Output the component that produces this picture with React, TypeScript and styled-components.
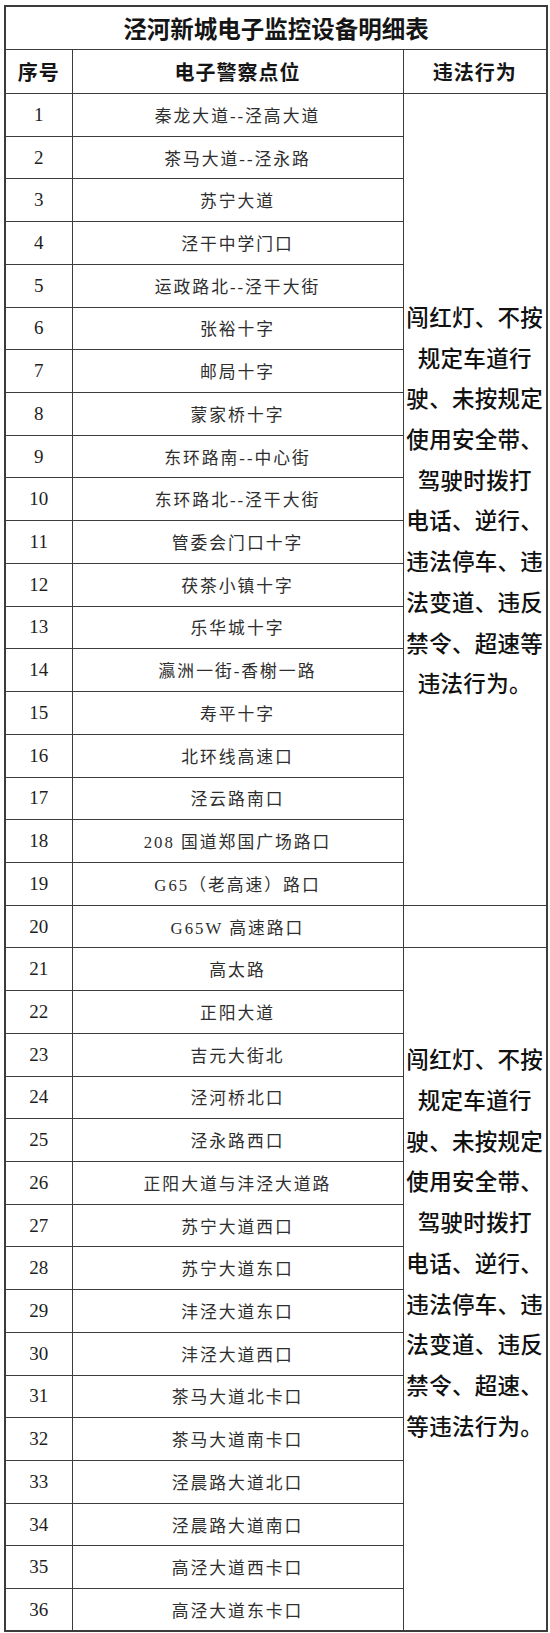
import styled, { createGlobalStyle } from "styled-components";

const GlobalStyle = createGlobalStyle`
  html, body {
    margin: 0;
    padding: 0;
    background: #ffffff;
  }
`;

const Page = styled.div`
  width: 550px;
  padding: 5px 4px 4px 4px;
  box-sizing: border-box;
  background: #ffffff;
`;

const Table = styled.table`
  width: 542px;
  border-collapse: collapse;
  table-layout: fixed;
  border: 2px solid #3c3c3c;
  color: #222;
`;

const TitleCell = styled.th`
  height: 42px;
  padding: 0;
  border: 1.5px solid #3c3c3c;
  font-family: "Noto Sans CJK SC", sans-serif;
  font-size: 23.5px;
  font-weight: 700;
  color: #151515;
  text-align: center;
  vertical-align: middle;
`;

const HeaderCell = styled.th`
  height: 43px;
  padding: 0;
  border: 1.5px solid #3c3c3c;
  font-family: "Noto Sans CJK SC", sans-serif;
  font-size: 20px;
  font-weight: 700;
  letter-spacing: 1px;
  color: #151515;
  text-align: center;
  vertical-align: middle;
`;

const Row = styled.tr`
  height: 42.72px;
`;

const NumCell = styled.td`
  padding: 0;
  border: 1.5px solid #3c3c3c;
  font-family: "Liberation Serif", "Noto Sans CJK SC", serif;
  font-size: 19px;
  color: #1e1e1e;
  text-align: center;
  vertical-align: middle;
`;

const PlaceCell = styled.td`
  padding: 0;
  border: 1.5px solid #3c3c3c;
  font-family: "Liberation Serif", "Noto Sans CJK SC", serif;
  font-size: 16.8px;
  letter-spacing: 2px;
  color: #2e2e2e;
  text-align: center;
  vertical-align: middle;
  white-space: nowrap;
`;

const ViolationCell = styled.td<{ $top: number }>`
  padding: ${(p) => p.$top}px 0 0 0;
  border: 1.5px solid #3c3c3c;
  font-family: "Noto Sans CJK SC", sans-serif;
  font-size: 22.5px;
  font-weight: 500;
  color: #111;
  text-align: center;
  vertical-align: top;
`;

const Line = styled.div`
  display: block;
  height: 40.7px;
  line-height: 40.7px;
  white-space: nowrap;
  letter-spacing: 0.3px;
`;

const places = [
  "秦龙大道--泾高大道",
  "茶马大道--泾永路",
  "苏宁大道",
  "泾干中学门口",
  "运政路北--泾干大街",
  "张裕十字",
  "邮局十字",
  "蒙家桥十字",
  "东环路南--中心街",
  "东环路北--泾干大街",
  "管委会门口十字",
  "茯茶小镇十字",
  "乐华城十字",
  "瀛洲一街-香榭一路",
  "寿平十字",
  "北环线高速口",
  "泾云路南口",
  "208 国道郑国广场路口",
  "G65（老高速）路口",
  "G65W 高速路口",
  "高太路",
  "正阳大道",
  "吉元大街北",
  "泾河桥北口",
  "泾永路西口",
  "正阳大道与沣泾大道路",
  "苏宁大道西口",
  "苏宁大道东口",
  "沣泾大道东口",
  "沣泾大道西口",
  "茶马大道北卡口",
  "茶马大道南卡口",
  "泾晨路大道北口",
  "泾晨路大道南口",
  "高泾大道西卡口",
  "高泾大道东卡口",
];

const firstBlock = [
  "闯红灯、不按",
  "规定车道行",
  "驶、未按规定",
  "使用安全带、",
  "驾驶时拨打",
  "电话、逆行、",
  "违法停车、违",
  "法变道、违反",
  "禁令、超速等",
  "违法行为。",
];

const secondBlock = [
  "闯红灯、不按",
  "规定车道行",
  "驶、未按规定",
  "使用安全带、",
  "驾驶时拨打",
  "电话、逆行、",
  "违法停车、违",
  "法变道、违反",
  "禁令、超速、",
  "等违法行为。",
];

const violationCell = (index: number) => {
  if (index === 0) {
    return (
      <ViolationCell rowSpan={19} $top={202}>
        {firstBlock.map((line, i) => (
          <Line key={i}>{line}</Line>
        ))}
      </ViolationCell>
    );
  }
  if (index === 19) return <ViolationCell $top={0} />;
  if (index === 20) {
    return (
      <ViolationCell rowSpan={16} $top={90}>
        {secondBlock.map((line, i) => (
          <Line key={i}>{line}</Line>
        ))}
      </ViolationCell>
    );
  }
  return null;
};

const App: React.FC = () => {
  return (
    <Page>
      <GlobalStyle />
      <Table>
        <colgroup>
          <col style={{ width: 67 }} />
          <col style={{ width: 331 }} />
          <col style={{ width: 144 }} />
        </colgroup>
        <thead>
          <tr>
            <TitleCell colSpan={3}>泾河新城电子监控设备明细表</TitleCell>
          </tr>
          <tr>
            <HeaderCell>序号</HeaderCell>
            <HeaderCell>电子警察点位</HeaderCell>
            <HeaderCell>违法行为</HeaderCell>
          </tr>
        </thead>
        <tbody>
          {places.map((place, index) => (
            <Row key={index}>
              <NumCell>{index + 1}</NumCell>
              <PlaceCell>{place}</PlaceCell>
              {violationCell(index)}
            </Row>
          ))}
        </tbody>
      </Table>
    </Page>
  );
};

export default App;
